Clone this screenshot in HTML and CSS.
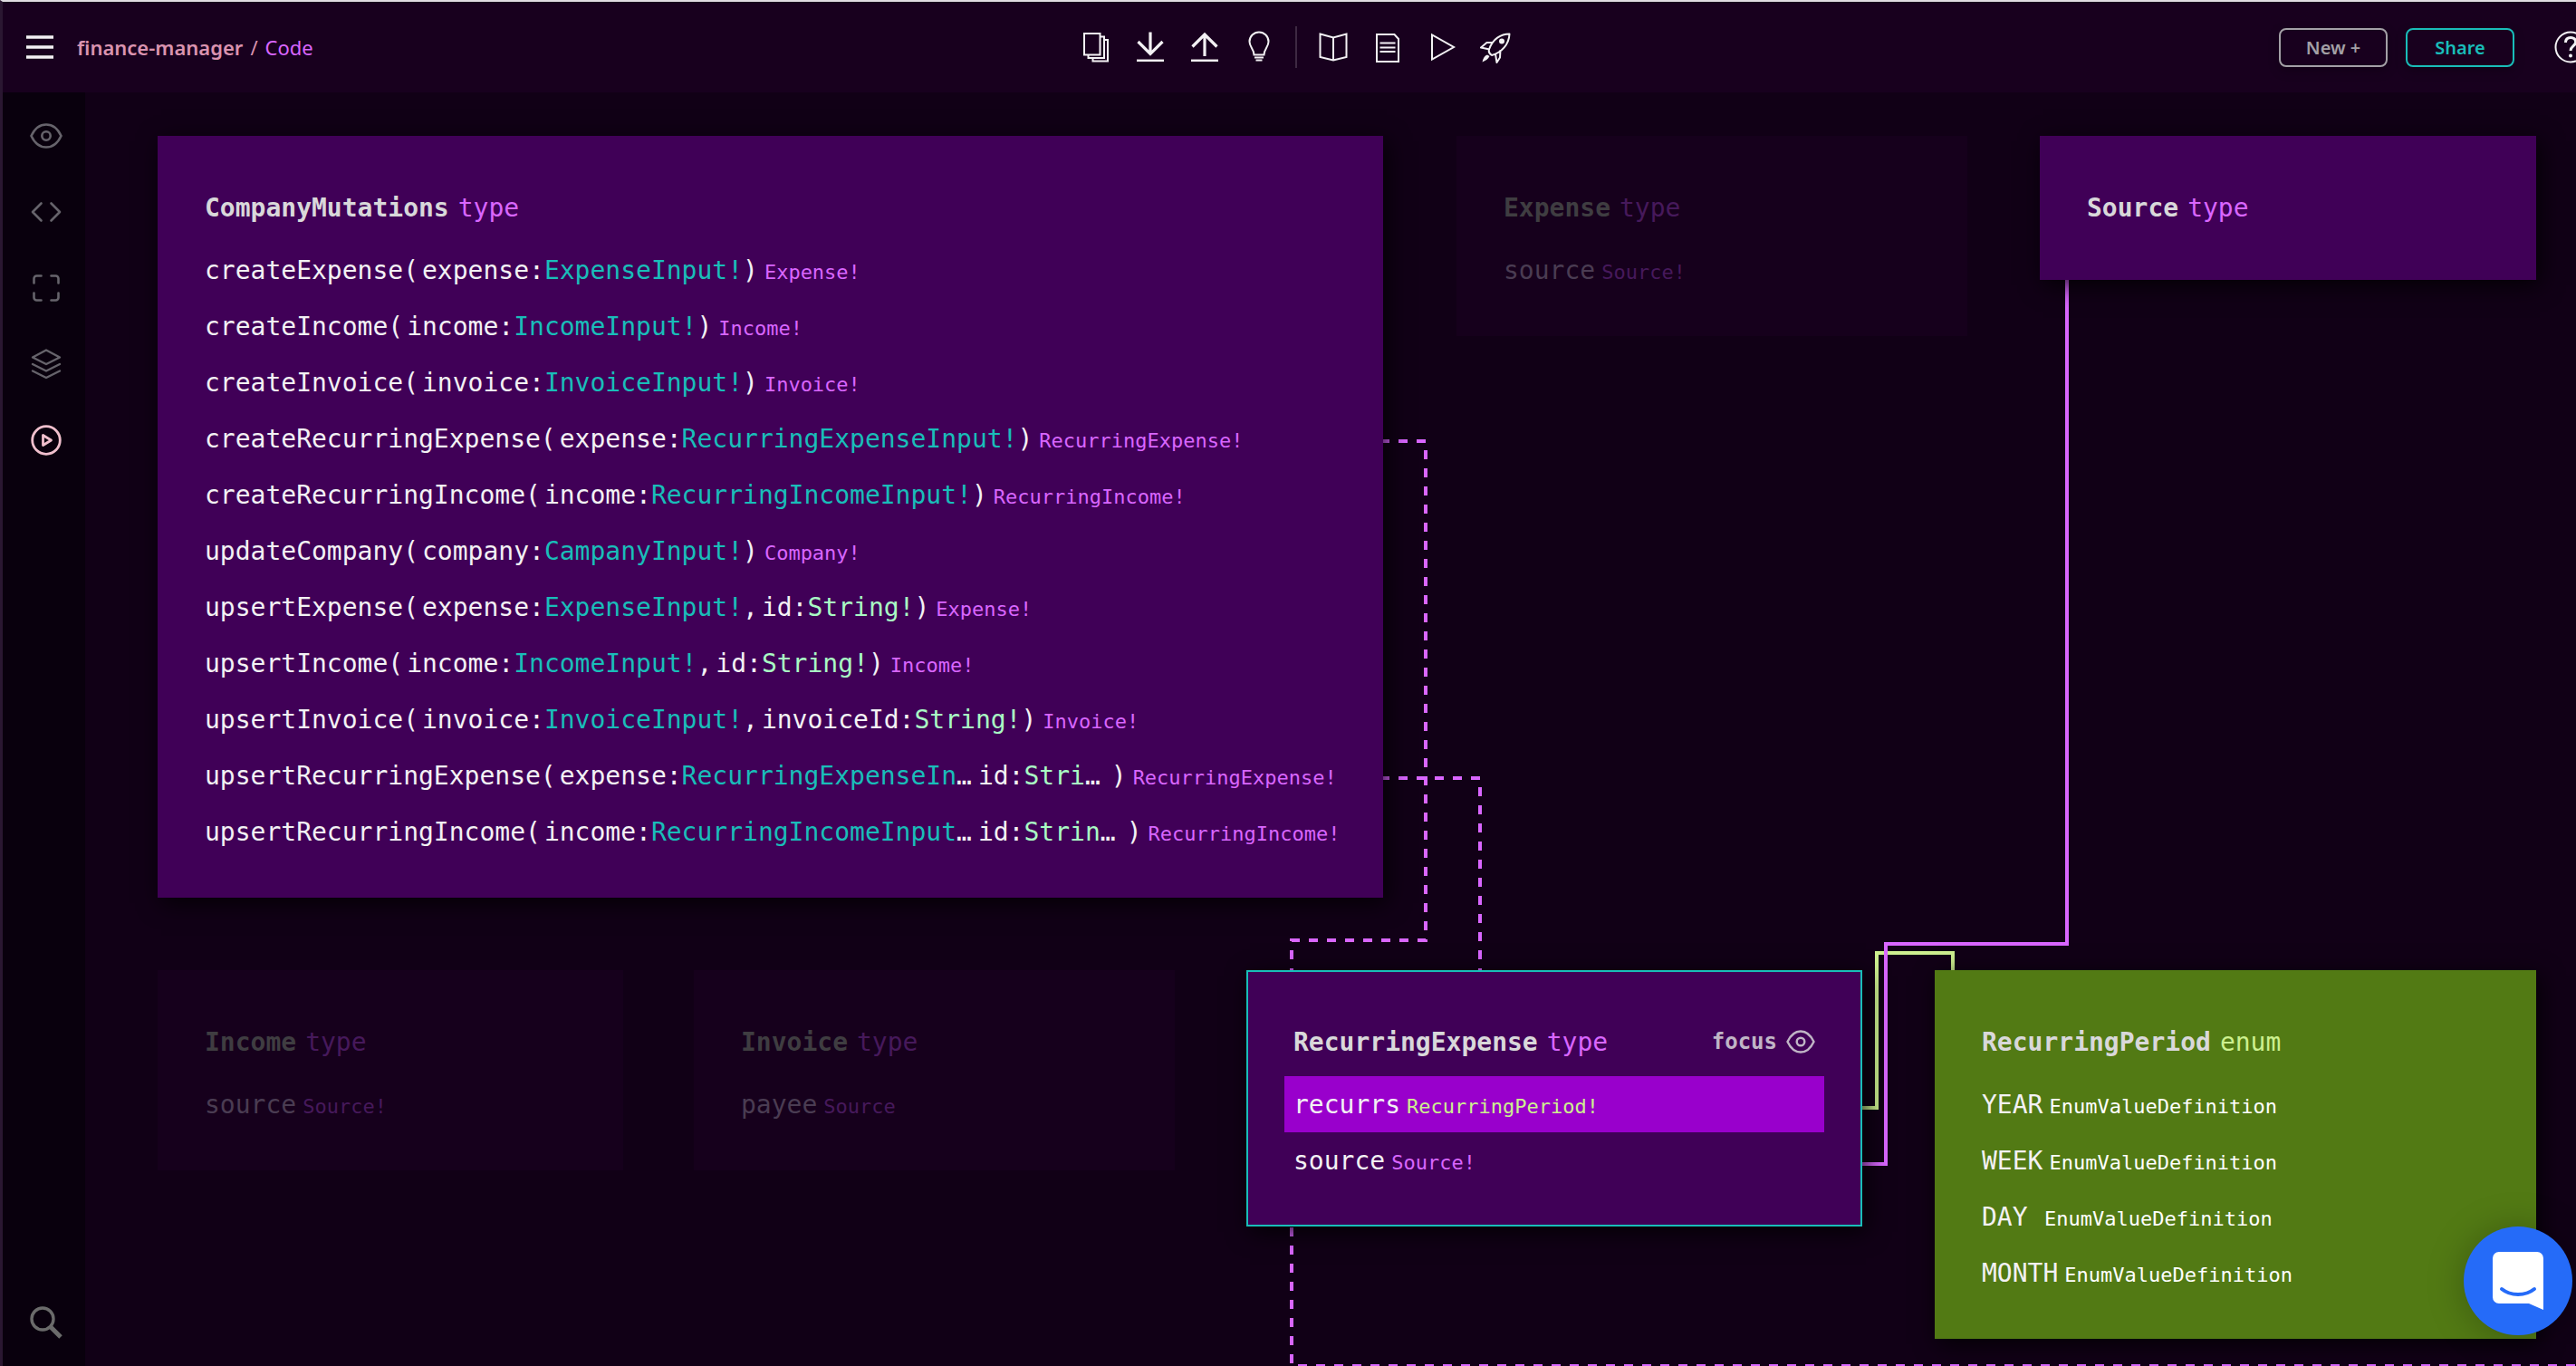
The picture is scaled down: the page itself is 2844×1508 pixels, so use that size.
FILE: index.html
```html
<!DOCTYPE html>
<html lang="en">
<head>
<meta charset="utf-8">
<title>finance-manager / Code</title>
<link rel="stylesheet" href="styles.css">
</head>
<body>
<header class="topbar">
  <div class="topbar-left">
    <button class="icon-btn menu-btn" aria-label="Menu">
      <svg width="30" height="26" viewBox="0 0 30 26" fill="none" stroke="currentColor" stroke-width="3.4"><path d="M0 2h30M0 13h30M0 24h30"/></svg>
    </button>
    <nav class="crumbs" aria-label="Breadcrumb">
      <a class="crumb-project" href="#">finance-manager</a>
      <span class="crumb-slash">/</span>
      <a class="crumb-page" href="#">Code</a>
    </nav>
  </div>
  <div class="tools">
    <button class="icon-btn tool" aria-label="Copy">
      <svg width="36" height="36" viewBox="0 0 36 36" fill="none" stroke="currentColor" stroke-width="2"><path d="M5 3h17.500v23.500H5zM22.500 6.500h4.500v23.500H9.500v-3.500M27 10h4v23.500H14.500v-3.500"/></svg>
    </button>
    <button class="icon-btn tool" aria-label="Download">
      <svg width="36" height="36" viewBox="0 0 36 36" fill="none" stroke="currentColor" stroke-width="3.200"><path d="M18 1.500v24M4.500 12L18 25.500 31.500 12"/><path d="M3 32.800h30" stroke-width="2.500"/></svg>
    </button>
    <button class="icon-btn tool" aria-label="Upload">
      <svg width="36" height="36" viewBox="0 0 36 36" fill="none" stroke="currentColor" stroke-width="3.200"><path d="M18 28V4M4.500 17.500L18 4l13.500 13.500"/><path d="M3 32.800h30" stroke-width="2.500"/></svg>
    </button>
    <button class="icon-btn tool" aria-label="Ideas">
      <svg width="36" height="36" viewBox="0 0 36 36" fill="none" stroke="currentColor" stroke-width="2"><path d="M12.500 26.500C12.500 20 7.500 18 7.500 12a10.500 10.500 0 0 1 21 0c0 6-5 8-5 14.500zM13 29.500h10M14.500 32.500h7"/></svg>
    </button>
    <span class="tools-divider"></span>
    <button class="icon-btn tool" aria-label="Docs">
      <svg width="36" height="36" viewBox="0 0 36 36" fill="none" stroke="currentColor" stroke-width="2"><path d="M3.500 3.500L18 7.500l14.500-4V29L18 32.500 3.500 29zM18 7.500v25"/></svg>
    </button>
    <button class="icon-btn tool" aria-label="Notes">
      <svg width="36" height="36" viewBox="0 0 36 36" fill="none" stroke="currentColor" stroke-width="2"><path d="M6 4h19.500l4.500 5V34H6z"/><path d="M9.500 13.500h17M9.500 18.500h17M9.500 23h17"/></svg>
    </button>
    <button class="icon-btn tool" aria-label="Run">
      <svg width="36" height="36" viewBox="0 0 36 36" fill="none" stroke="currentColor" stroke-width="2"><path d="M7 4.500v27L31 18z"/></svg>
    </button>
    <button class="icon-btn tool" aria-label="Deploy">
      <svg width="36" height="36" viewBox="0 0 36 36" fill="none" stroke="currentColor" stroke-width="2" stroke-linejoin="round"><path d="M32.500 3.500C23 3.500 14 9 10 20.500c-.700 2.500.500 5 3 6.500C24 24 32 15 32.500 3.500zM14.500 13H7.500L1 18.500l9.500 2M17 25.500l1.500 9.500 3.500-5.500.500-8.500"/><circle cx="24" cy="11.500" r="3" fill="currentColor" stroke="none"/><path d="M8 26.500c-3 1-4.500 3.500-5.500 8 3.500-1.500 6.500-3 8-6.500z" fill="currentColor" stroke="none"/></svg>
    </button>
  </div>
  <div class="topbar-right">
    <button class="pill">New +</button>
    <button class="pill pill-accent">Share</button>
    <button class="icon-btn help" aria-label="Help">
      <svg width="36" height="36" viewBox="0 0 36 36" fill="none" stroke="currentColor"><circle cx="18" cy="18" r="16.500" stroke-width="2"/><path d="M12.500 13c0-3.800 2.500-5.500 5.700-5.500 3 0 5.500 1.700 5.500 5 0 4-5.700 4.500-5.700 9.500" stroke-width="3"/><circle cx="18" cy="27.500" r="2" fill="currentColor" stroke="none"/></svg>
    </button>
  </div>
</header>
<div class="workspace">
  <nav class="sidebar" aria-label="Views">
    <button class="icon-btn side" aria-label="Preview">
      <svg width="36" height="36" viewBox="0 0 36 36" fill="none" stroke="currentColor" stroke-width="2.600"><path d="M1.500 18C5 10.500 11 5.500 18 5.500S31 10.500 34.500 18C31 25.500 25 30.500 18 30.500S5 25.500 1.500 18z"/><circle cx="18" cy="18" r="4.700"/></svg>
    </button>
    <button class="icon-btn side" aria-label="Code">
      <svg width="36" height="36" viewBox="0 0 36 36" fill="none" stroke="currentColor" stroke-width="2.600" stroke-linecap="round" stroke-linejoin="round"><path d="M12.500 8.500L3 18l9.500 9.500M23.500 8.500L33 18l-9.500 9.500"/></svg>
    </button>
    <button class="icon-btn side" aria-label="Fit to screen">
      <svg width="36" height="36" viewBox="0 0 36 36" fill="none" stroke="currentColor" stroke-width="2.600" stroke-linecap="round"><path d="M4.500 12.500V7.500a3 3 0 0 1 3-3h5M23.500 4.500h5a3 3 0 0 1 3 3v5M31.500 23.500v5a3 3 0 0 1-3 3h-5M12.500 31.500h-5a3 3 0 0 1-3-3v-5"/></svg>
    </button>
    <button class="icon-btn side" aria-label="Layers">
      <svg width="36" height="36" viewBox="0 0 36 36" fill="none" stroke="currentColor" stroke-width="2.400" stroke-linecap="round" stroke-linejoin="round"><path d="M18 2.500L33 10.500 18 18 3 10.500zM3 18l15 7.500L33 18M3 25.500L18 33l15-7.500"/></svg>
    </button>
    <button class="icon-btn side side-active" aria-label="Play">
      <svg width="36" height="36" viewBox="0 0 36 36" fill="none" stroke="currentColor" stroke-width="2.800" stroke-linejoin="round"><circle cx="18" cy="18" r="15.300"/><path d="M14.500 12.500v11l9-5.500z"/></svg>
    </button>
    <button class="icon-btn side side-search" aria-label="Search">
      <svg width="36" height="36" viewBox="0 0 36 36" fill="none" stroke="currentColor"><circle cx="14" cy="14" r="12" stroke-width="3.400"/><path d="M22.500 22.500l11.500 11.500" stroke-width="5"/></svg>
    </button>
  </nav>
  <main class="canvas">
    <svg class="links" width="2844" height="1508" fill="none" stroke-width="4">
      <g class="link-type" stroke-dasharray="10 10">
        <path d="M1430 385H1480V936H1332V980"/>
        <path d="M1430 757H1540V980"/>
        <path d="M1332 1253V1406H2844"/>
      </g>
      <path class="link-enum" d="M1950 1121H1978V950H2062V980"/>
      <path class="link-type" d="M2188 200V940H1988V1183H1950"/>
    </svg>

    <article class="node n-company">
      <h2 class="node-title">CompanyMutations<span class="kind">type</span></h2>
      <ul class="fields">
        <li>createExpense(<span class="arg">expense:<i class="t-input">ExpenseInput!</i></span>)<span class="ret">Expense!</span></li>
        <li>createIncome(<span class="arg">income:<i class="t-input">IncomeInput!</i></span>)<span class="ret">Income!</span></li>
        <li>createInvoice(<span class="arg">invoice:<i class="t-input">InvoiceInput!</i></span>)<span class="ret">Invoice!</span></li>
        <li>createRecurringExpense(<span class="arg">expense:<i class="t-input">RecurringExpenseInput!</i></span>)<span class="ret">RecurringExpense!</span></li>
        <li>createRecurringIncome(<span class="arg">income:<i class="t-input">RecurringIncomeInput!</i></span>)<span class="ret">RecurringIncome!</span></li>
        <li>updateCompany(<span class="arg">company:<i class="t-input">CampanyInput!</i></span>)<span class="ret">Company!</span></li>
        <li>upsertExpense(<span class="arg">expense:<i class="t-input">ExpenseInput!</i></span>,<span class="arg">id:<i class="t-scalar">String!</i></span>)<span class="ret">Expense!</span></li>
        <li>upsertIncome(<span class="arg">income:<i class="t-input">IncomeInput!</i></span>,<span class="arg">id:<i class="t-scalar">String!</i></span>)<span class="ret">Income!</span></li>
        <li>upsertInvoice(<span class="arg">invoice:<i class="t-input">InvoiceInput!</i></span>,<span class="arg">invoiceId:<i class="t-scalar">String!</i></span>)<span class="ret">Invoice!</span></li>
        <li>upsertRecurringExpense(<span class="arg">expense:<i class="t-input">RecurringExpenseIn</i>…</span><span class="arg arg-cut">id:<i class="t-scalar">Stri</i>…</span>)<span class="ret">RecurringExpense!</span></li>
        <li>upsertRecurringIncome(<span class="arg">income:<i class="t-input">RecurringIncomeInput</i>…</span><span class="arg arg-cut">id:<i class="t-scalar">Strin</i>…</span>)<span class="ret">RecurringIncome!</span></li>
      </ul>
    </article>

    <article class="node node-dim n-expense">
      <h2 class="node-title">Expense<span class="kind">type</span></h2>
      <ul class="fields"><li>source<span class="ret">Source!</span></li></ul>
    </article>

    <article class="node n-source">
      <h2 class="node-title">Source<span class="kind">type</span></h2>
    </article>

    <article class="node node-dim n-income">
      <h2 class="node-title">Income<span class="kind">type</span></h2>
      <ul class="fields"><li>source<span class="ret">Source!</span></li></ul>
    </article>

    <article class="node node-dim n-invoice">
      <h2 class="node-title">Invoice<span class="kind">type</span></h2>
      <ul class="fields"><li>payee<span class="ret">Source</span></li></ul>
    </article>

    <article class="node node-selected n-recurring">
      <h2 class="node-title">RecurringExpense<span class="kind">type</span>
        <button class="focus-btn">focus
          <svg width="32" height="26" viewBox="0 0 32 26" fill="none" stroke="currentColor" stroke-width="2.400"><path d="M1.500 13C5 5.500 10 1.500 16 1.500S27 5.500 30.500 13C27 20.500 22 24.500 16 24.500S5 20.500 1.500 13z"/><circle cx="16" cy="13" r="4.300"/></svg>
        </button>
      </h2>
      <ul class="fields">
        <li class="field-active">recurrs<span class="ret ret-enum">RecurringPeriod!</span></li>
        <li>source<span class="ret">Source!</span></li>
      </ul>
    </article>

    <article class="node node-enum n-period">
      <h2 class="node-title">RecurringPeriod<span class="kind">enum</span></h2>
      <ul class="fields">
        <li><span class="value">YEAR</span><span class="ret">EnumValueDefinition</span></li>
        <li><span class="value">WEEK</span><span class="ret">EnumValueDefinition</span></li>
        <li><span class="value">DAY</span><span class="ret">EnumValueDefinition</span></li>
        <li><span class="value">MONTH</span><span class="ret">EnumValueDefinition</span></li>
      </ul>
    </article>
  </main>
</div>
<button class="chat" aria-label="Open chat">
  <svg width="56" height="64" viewBox="0 0 56 64"><path d="M7 0h42a7 7 0 0 1 7 7v57L40 57H7a7 7 0 0 1-7-7V7a7 7 0 0 1 7-7z" fill="#fff"/><path d="M10 41c10 8 26 8 36 0" fill="none" stroke="#256bf8" stroke-width="4" stroke-linecap="round"/></svg>
</button>
</body>
</html>
```
FILE: styles.css
```css
* { box-sizing: border-box; }

body {
  margin: 0;
  height: 100vh;
  display: flex;
  flex-direction: column;
  overflow: hidden;
  background: #110016;
  border-top: 2px solid #dfdce1;
  border-left: 3px solid #2a1731;
  color: #f3f1f4;
  font-family: "Noto Sans", sans-serif;
}

button { font: inherit; color: inherit; cursor: pointer; }
a { color: inherit; text-decoration: none; }

.icon-btn {
  display: flex;
  align-items: center;
  justify-content: center;
  padding: 0;
  border: 0;
  background: none;
}

/* Top bar */
.topbar {
  flex: none;
  height: 100px;
  display: grid;
  grid-template-columns: 1fr auto 1fr;
  align-items: center;
  background: #18001e;
}
.topbar-left { display: flex; align-items: center; gap: 26px; padding-left: 26px; }
.crumbs { display: flex; gap: 8px; font-size: 22px; line-height: 32px; color: #da93af; }
.crumb-project { font-weight: 600; }
.crumb-page { color: #d966ff; }
.tools { display: flex; align-items: center; padding-left: 15px; }
.tool { width: 60px; height: 60px; }
.tools-divider { width: 2px; height: 46px; margin: 0 10px; background: #3d2942; }
.topbar-right { display: flex; align-items: center; justify-content: flex-end; gap: 20px; }
.pill {
  width: 120px;
  height: 43px;
  padding: 0;
  border: 2px solid #a3a0a6;
  border-radius: 8px;
  background: #18001e;
  color: #a3a0a6;
  font-size: 20px;
  font-weight: 600;
  box-shadow: 0 4px 12px #00000040;
}
.pill-accent { border-color: #19bdb9; color: #19bdb9; }
.help { margin-left: 24px; margin-right: -12px; }

/* Sidebar */
.workspace { flex: 1; min-height: 0; display: flex; }
.sidebar {
  flex: none;
  width: 91px;
  display: flex;
  flex-direction: column;
  padding: 6px 0 6px 4px;
  background: #09000d;
}
.side { height: 84px; color: #66636b; }
.side-active { color: #f0bfcd; }
.side-search { margin-top: auto; color: #6b6b6b; }

/* Schema canvas */
.canvas {
  position: relative;
  flex: 1;
  min-width: 0;
  overflow: hidden;
  font-family: "DejaVu Sans Mono", monospace;
  font-size: 28px;
}
.links { position: absolute; left: 0; top: 0; }
.link-type { stroke: #d966ff; }
.link-enum { stroke: #cdf08f; }

.node {
  position: absolute;
  padding: 48px 42px 42px;
  background: #400057;
  box-shadow: 4px 6px 24px #000000cc;
}
.node-title {
  display: flex;
  align-items: center;
  height: 62px;
  margin: 0 0 7px;
  padding: 0 10px;
  font-size: 28px;
  font-weight: 700;
  color: #d9d8da;
}
.kind { margin-left: 10px; font-weight: 400; color: #d966ff; }
.fields { margin: 0; padding: 0; list-style: none; }
.fields li {
  display: flex;
  align-items: baseline;
  height: 62px;
  padding: 2px 10px 0;
  line-height: 60px;
  white-space: nowrap;
}
.fields i { font-style: normal; }
.arg { margin-left: 4px; }
.arg-cut { margin-left: 7px; margin-right: 12px; }
.t-input { color: #19bdb9; }
.t-scalar { color: #a9fbc4; }
.ret { margin-left: 7px; font-size: 22px; line-height: 40px; color: #d966ff; }
.field-active { background: #9900cc; }
.ret-enum { color: #cdf08f; }
.value { min-width: 62px; }

.focus-btn {
  display: flex;
  align-items: center;
  gap: 10px;
  margin-left: auto;
  padding: 0;
  border: 0;
  background: none;
  font-size: 24px;
  color: #c0b5c6;
}

.node-dim { background: #16001c; box-shadow: none; color: #4a3c52; }
.node-dim .node-title { color: #3f3d41; }
.node-dim .kind, .node-dim .ret { color: #46195b; }
.node-selected { outline: 2px solid #19bdb9; outline-offset: -2px; }
.node-enum { background: #527a14; }
.node-enum .kind { color: #cdf08f; }
.node-enum .ret { color: #ffffff; }

/* Node positions on the canvas */
.n-company { left: 80px; top: 48px; width: 1353px; }
.n-expense { left: 1514px; top: 48px; width: 564px; }
.n-source { left: 2158px; top: 48px; width: 548px; }
.n-income { left: 80px; top: 969px; width: 514px; }
.n-invoice { left: 672px; top: 969px; width: 531px; }
.n-recurring { left: 1282px; top: 969px; width: 680px; }
.n-period { left: 2042px; top: 969px; width: 664px; }

/* Chat launcher */
.chat {
  position: fixed;
  right: 4px;
  bottom: 34px;
  width: 120px;
  height: 120px;
  display: flex;
  align-items: center;
  justify-content: center;
  padding: 0;
  border: 0;
  border-radius: 50%;
  background: #256bf8;
  box-shadow: 0 2px 40px #00000040;
}
```
